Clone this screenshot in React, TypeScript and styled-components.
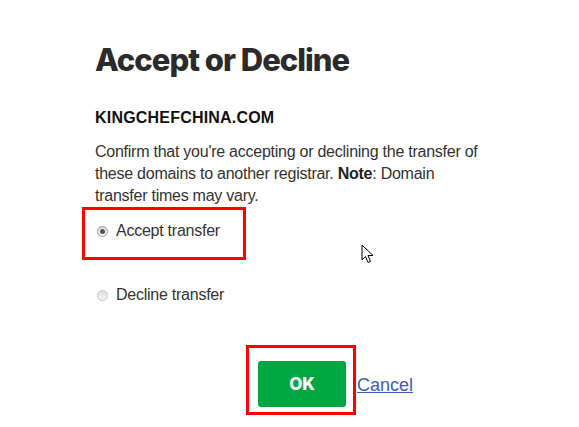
import React, { useState } from "react";
import styled, { createGlobalStyle } from "styled-components";

const GlobalStyle = createGlobalStyle`
  body {
    margin: 0;
    background: #fff;
    font-family: "Liberation Sans", Arial, sans-serif;
    color: #333;
  }
`;

type Choice = "accept" | "decline";

const App = () => {
  const [choice, setChoice] = useState<Choice>("accept");

  return (
    <Page>
      <GlobalStyle />
      <Title>Accept or Decline</Title>
      <DomainName>KINGCHEFCHINA.COM</DomainName>
      <Description>
        Confirm that you're accepting or declining the transfer of these
        domains to another registrar. <strong>Note</strong>: Domain transfer
        times may vary.
      </Description>
      <Options>
        <AcceptHighlight>
          <OptionRow onClick={() => setChoice("accept")}>
            <Radio $checked={choice === "accept"} />
            Accept transfer
          </OptionRow>
        </AcceptHighlight>
        <DeclineRow onClick={() => setChoice("decline")}>
          <Radio $checked={choice === "decline"} />
          Decline transfer
        </DeclineRow>
      </Options>
      <Actions>
        <ButtonHighlight>
          <OkButton>OK</OkButton>
        </ButtonHighlight>
        <CancelLink href="#">Cancel</CancelLink>
      </Actions>
      <Cursor width="13" height="21" viewBox="0 0 13 21">
        <path
          d="M1 1 L1 16 L4.5 12.5 L7 18.5 L9.5 17.5 L7 11.5 L12 11.5 Z"
          fill="#fff"
          stroke="#000"
          strokeWidth="1"
          strokeLinejoin="miter"
        />
      </Cursor>
    </Page>
  );
};

const Page = styled.div`
  position: relative;
  width: 579px;
  height: 427px;
  box-sizing: border-box;
  padding: 38px 0 0 95px;
  overflow: hidden;
`;

const Title = styled.h1`
  margin: 0;
  font-family: Inter, "Open Sans", sans-serif;
  font-weight: 800;
  font-size: 31px;
  line-height: 44px;
  letter-spacing: -1px;
  color: #2b2b2b;
`;

const DomainName = styled.h2`
  margin: 26px 0 0;
  font-size: 16px;
  font-weight: 700;
  line-height: 20px;
  letter-spacing: 0.2px;
  color: #111;
`;

const Description = styled.p`
  margin: 13px 0 0;
  width: 388px;
  font-size: 16px;
  line-height: 22px;
  letter-spacing: -0.25px;
  color: #333;

  strong {
    color: #222;
  }
`;

const Options = styled.div`
  display: flex;
  flex-direction: column;
  align-items: flex-start;
`;

const AcceptHighlight = styled.div`
  margin: 0 0 0 -13px;
  width: 146px;
  padding: 11px 0 16px 12px;
  border: 3px solid #ff0000;
  box-sizing: content-box;
`;

const OptionRow = styled.label`
  display: flex;
  align-items: center;
  gap: 8px;
  font-size: 16px;
  line-height: 20px;
  letter-spacing: -0.25px;
  color: #333;
  cursor: pointer;
`;

const DeclineRow = styled(OptionRow)`
  margin: 25px 0 0 2px;
`;

const Radio = styled.span<{ $checked: boolean }>`
  position: relative;
  width: 11px;
  height: 11px;
  border-radius: 50%;
  box-sizing: border-box;
  border: 1px solid ${(p) => (p.$checked ? "#9a9a9a" : "#c4c4c4")};
  background: linear-gradient(#dcdcdc, #f6f6f6);
  flex-shrink: 0;

  &::after {
    content: "";
    display: ${(p) => (p.$checked ? "block" : "none")};
    position: absolute;
    left: 2px;
    top: 2px;
    width: 5px;
    height: 5px;
    border-radius: 50%;
    background: #555;
  }
`;

const Actions = styled.div`
  display: flex;
  align-items: flex-start;
  margin: 40px 0 0 151px;
`;

const ButtonHighlight = styled.div`
  border: 3px solid #ff0000;
  padding: 13px 7px 5px 9px;
`;

const OkButton = styled.button`
  display: block;
  width: 88px;
  height: 46px;
  border: none;
  border-radius: 3px;
  background: #00a63f;
  color: #fff;
  font-family: Inter, "Open Sans", sans-serif;
  font-weight: 800;
  font-size: 17px;
  cursor: pointer;
`;

const CancelLink = styled.a`
  margin: 30px 0 0 1px;
  font-size: 18px;
  line-height: 20px;
  color: #3b5cc4;
  text-decoration: underline;
`;

const Cursor = styled.svg`
  position: absolute;
  left: 361px;
  top: 244px;
`;

export default App;
